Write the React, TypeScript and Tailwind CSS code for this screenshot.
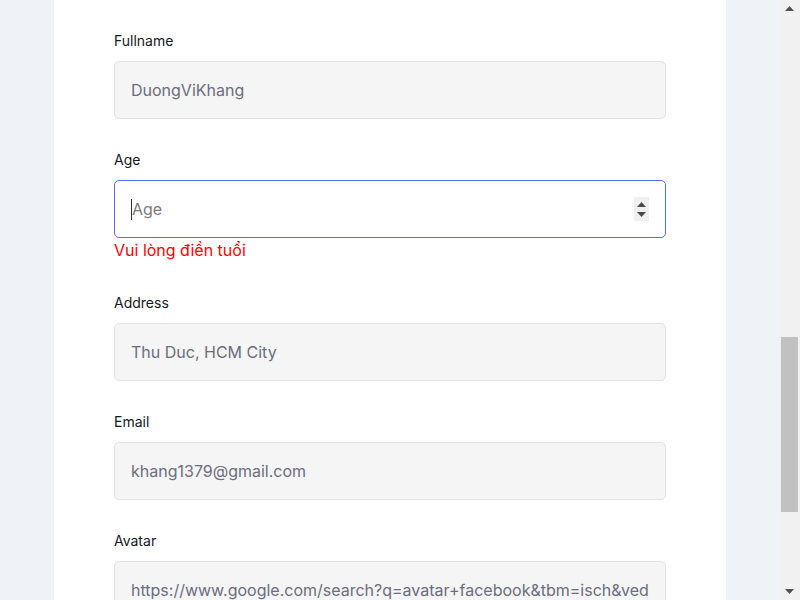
import React from "react";

const FIELDS_AFTER = [
  { label: "Address", value: "Thu Duc, HCM City" },
  { label: "Email", value: "khang1379@gmail.com" },
  { label: "Avatar", value: "https://www.google.com/search?q=avatar+facebook&tbm=isch&ved=2ahUKEwi" },
];

function Field({ label, value }: { label: string; value: string }) {
  return (
    <div className="mb-[31px]">
      <label className="block text-sm leading-5 font-normal text-[#151724] mb-2.5">{label}</label>
      <input
        readOnly
        defaultValue={value}
        className="w-full h-[58px] px-4 rounded-[5px] border border-[#e2e2e2] bg-[#f5f5f5] text-base text-[#6b6d80] outline-none"
      />
    </div>
  );
}

export default function App() {
  return (
    <div className="h-screen overflow-hidden flex bg-[#eff2f7] font-['Inter',sans-serif]">
      <div className="flex-1">
        <div className="ml-[54px] w-[672px] h-full bg-white px-[60px] pt-[31px]">
          <Field label="Fullname" value="DuongViKhang" />

          {/* Age - focused with error */}
          <div className="mb-[31px]">
            <label className="block text-sm leading-5 font-normal text-[#151724] mb-2.5">Age</label>
            <div className="flex items-center h-[58px] pl-4 pr-4 rounded-[5px] border border-[#4f6ef2] bg-white">
              <span className="w-px h-[21px] bg-[#333]" />
              <input
                placeholder="Age"
                className="flex-1 min-w-0 text-base text-[#333] placeholder:text-[#7a7a7a] outline-none bg-transparent"
              />
              <div className="w-[15px] h-[24px] bg-[#f0f0f0] flex flex-col items-center justify-center gap-[5px]">
                <svg width="9" height="5" viewBox="0 0 9 5"><path d="M4.5 0 L9 5 L0 5 Z" fill="#4a4a4a" /></svg>
                <svg width="9" height="5" viewBox="0 0 9 5"><path d="M0 0 L9 0 L4.5 5 Z" fill="#4a4a4a" /></svg>
              </div>
            </div>
            <p className="text-base leading-6 text-[#ff0000]">Vui lòng điền tuổi</p>
          </div>

          {FIELDS_AFTER.map((f) => (
            <Field key={f.label} label={f.label} value={f.value} />
          ))}
        </div>
      </div>

      {/* scrollbar */}
      <div className="w-[21px] h-full bg-[#f1f1f1] flex flex-col items-center">
        <div className="h-[17px] w-full flex items-center justify-center">
          <svg width="9" height="5" viewBox="0 0 9 5"><path d="M4.5 0 L9 5 L0 5 Z" fill="#505050" /></svg>
        </div>
        <div className="h-[320px]" />
        <div className="w-[17px] h-[175px] bg-[#c1c1c1]" />
        <div className="flex-1" />
        <div className="h-[17px] w-full flex items-center justify-center">
          <svg width="9" height="5" viewBox="0 0 9 5"><path d="M0 0 L9 0 L4.5 5 Z" fill="#505050" /></svg>
        </div>
      </div>
    </div>
  );
}
